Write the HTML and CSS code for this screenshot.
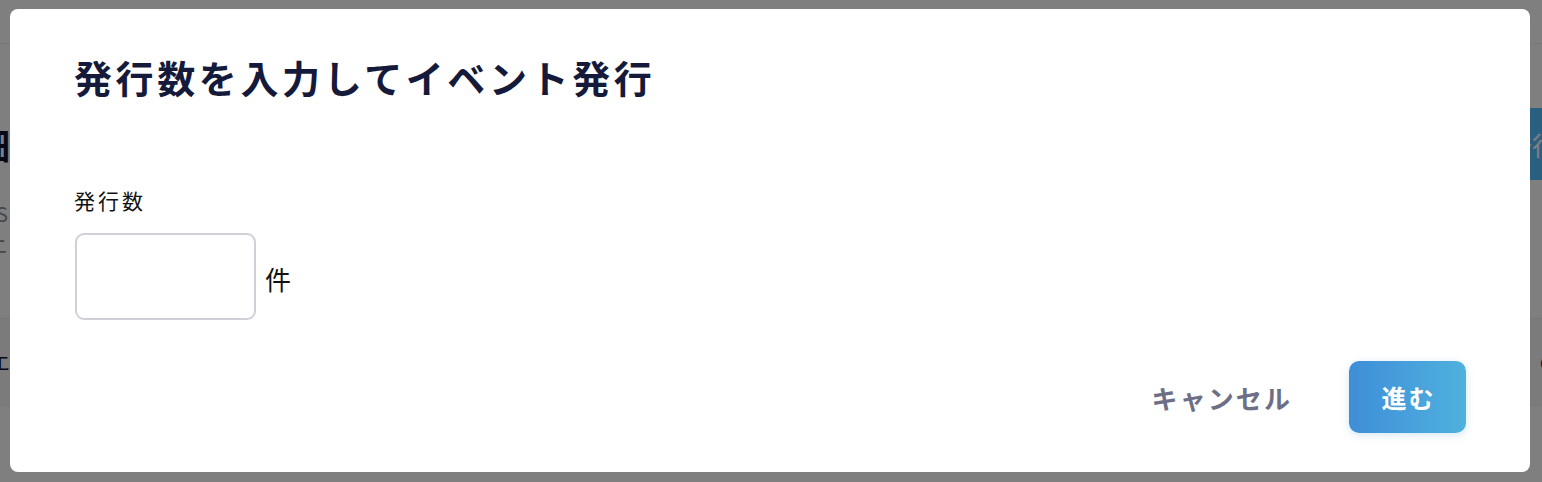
FILE: index.html
```html
<!DOCTYPE html>
<html lang="ja">
<head>
<meta charset="utf-8">
<title>発行数を入力してイベント発行</title>
<link rel="stylesheet" href="styles.css">
</head>
<body>
<div class="page">
  <header class="page-header"></header>
  <main class="page-main">
    <div class="page-title-row">
      <h1 class="page-title">明細</h1>
      <button class="page-action">発行</button>
    </div>
    <p class="page-sub">S</p>
    <p class="page-sub">ニ</p>
    <div class="page-table">
      <div class="page-row"><span class="page-cell">エ</span><span class="page-cell">C</span></div>
    </div>
  </main>
</div>

<div class="overlay">
  <div class="modal" role="dialog" aria-modal="true">
    <h2 class="modal-title">発行数を入力してイベント発行</h2>
    <div class="field">
      <label class="field-label" for="count">発行数</label>
      <div class="field-row">
        <input class="field-input" id="count" type="text">
        <span class="field-unit">件</span>
      </div>
    </div>
    <div class="modal-footer">
      <button class="btn-cancel">キャンセル</button>
      <button class="btn-primary">進む</button>
    </div>
  </div>
</div>
</body>
</html>
```
FILE: styles.css
```css
* { box-sizing: border-box; }
html, body { margin: 0; padding: 0; }
body {
  background: #ffffff;
  font-family: "Noto Sans CJK JP", "Noto Sans", sans-serif;
  width: 1542px;
  height: 482px;
  overflow: hidden;
}

/* background page */
.page { width: 1602px; margin-left: -30px; }
.page-header { height: 44px; border-bottom: 1px solid #f0f0f0; }
.page-main { padding: 0; }
.page-title-row {
  display: flex;
  justify-content: space-between;
  align-items: center;
  margin-top: 64px;
  height: 72px;
}
.page-title {
  margin: 0;
  font-size: 36px;
  font-weight: 700;
  color: #0d1030;
  line-height: 72px;
  direction: rtl;
  width: 40px;
  overflow: hidden;
  white-space: nowrap;
}
.page-action {
  width: 80px;
  height: 72px;
  border: none;
  background: #57beff;
  color: #ffffff;
  font-family: inherit;
  font-size: 26px;
  text-align: left;
  padding-left: 14px;
}
.page-sub {
  margin: 0;
  font-size: 20px;
  color: #888ca0;
  line-height: 32px;
  width: 38px;
  text-align: right;
}
.page-sub:first-of-type { margin-top: 18px; }
.page-table { margin-top: 56px; border-top: 1px solid #eeeeee; border-bottom: 1px solid #eeeeee; }
.page-row {
  display: flex;
  justify-content: space-between;
  height: 86px;
  align-items: center;
  background: #f6f6f6;
}
.page-cell { font-size: 20px; color: #0d1030; width: 40px; text-align: right; }
.page-cell + .page-cell { text-align: left; padding-left: 38px; width: 70px; font-weight: 700; }

/* overlay + modal */
.overlay {
  position: fixed;
  inset: 0;
  background: rgba(0, 0, 0, 0.5);
}
.modal {
  position: absolute;
  top: 9px;
  left: 10px;
  width: 1520px;
  height: 463px;
  background: #ffffff;
  border-radius: 8px;
  padding: 42px 64px 39px 64px;
  display: flex;
  flex-direction: column;
}
.modal-title {
  margin: 0;
  font-size: 38px;
  line-height: 52px;
  font-weight: 700;
  letter-spacing: 0.095em;
  color: #151a3b;
}
.field { margin-top: 83px; }
.field-label {
  display: block;
  font-size: 21px;
  line-height: 28px;
  letter-spacing: 0.14em;
  color: #111111;
}
.field-row {
  display: flex;
  align-items: center;
  gap: 9px;
  margin-top: 19px;
}
.field-input {
  width: 181px;
  height: 87px;
  margin-left: 1px;
  border: 2px solid #d0d1d8;
  border-radius: 9px;
  background: #ffffff;
  font-family: inherit;
  font-size: 22px;
  padding: 0 14px;
  outline: none;
}
.field-unit {
  font-size: 26px;
  line-height: 36px;
  color: #111111;
  margin-top: 4px;
}
.modal-footer {
  margin-top: auto;
  display: flex;
  justify-content: flex-end;
  align-items: center;
  gap: 57px;
}
.btn-cancel {
  background: none;
  border: none;
  padding: 0;
  font-family: inherit;
  font-size: 26px;
  font-weight: 700;
  letter-spacing: 0.08em;
  color: #6d6f86;
  line-height: 34px;
  margin-top: 2px;
}
.btn-primary {
  width: 117px;
  height: 72px;
  border: none;
  border-radius: 10px;
  background: linear-gradient(90deg, #3f8ed8 0%, #4fb1de 100%);
  box-shadow: 0 2px 8px rgba(79, 160, 222, 0.25);
  color: #ffffff;
  font-family: inherit;
  font-size: 25px;
  font-weight: 700;
  letter-spacing: 0.08em;
  padding: 0 0 0 2px;
}
```
